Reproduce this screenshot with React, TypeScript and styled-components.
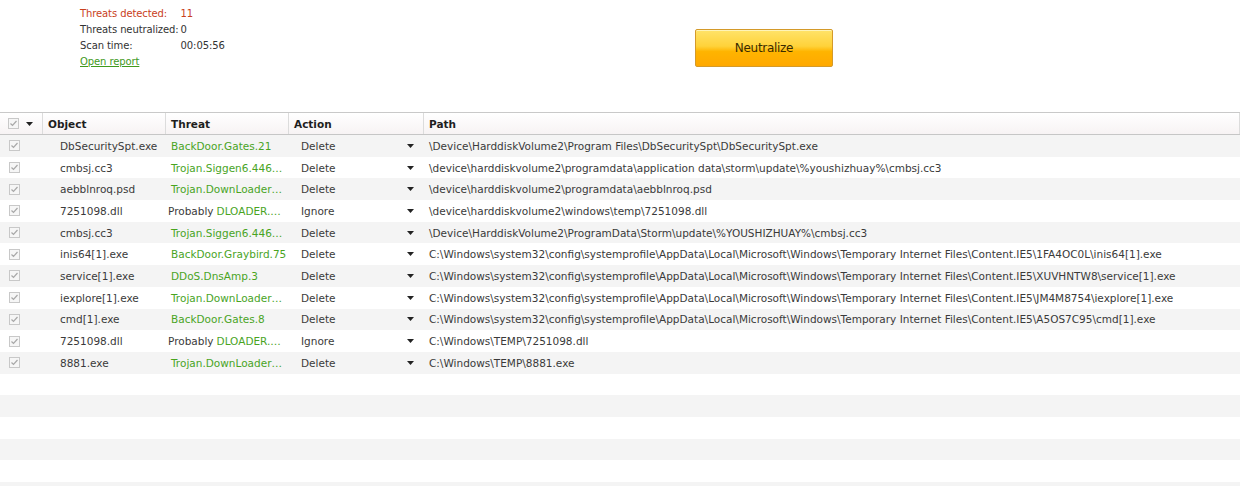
import React from "react";
import styled, { createGlobalStyle } from "styled-components";

const Global = createGlobalStyle`
  html, body { margin: 0; padding: 0; background: #fff; }
  body { font-family: "DejaVu Sans", Tahoma, sans-serif; font-size: 10.5px; color: #3a3a3a; }
`;

const Page = styled.div`
  width: 1240px;
  height: 486px;
  overflow: hidden;
  background: #fff;
`;

const Top = styled.div`
  height: 112px;
  display: flex;
  box-sizing: border-box;
  padding: 5px 0 0 80px;
`;

const Stats = styled.div`
  display: grid;
  grid-template-columns: max-content auto;
  column-gap: 2px;
  grid-auto-rows: 16px;
  align-items: center;
  width: 615px;
  align-content: start;
  font-size: 10px;
  letter-spacing: -0.1px;
`;

const Label = styled.span<{ $red?: boolean }>`
  color: ${(p) => (p.$red ? "#c9401c" : "#333")};
  white-space: nowrap;
`;

const Link = styled.a`
  color: #3f9a1c;
  text-decoration: underline;
  grid-column: 1 / span 2;
`;

const Button = styled.button`
  margin-top: 24px;
  width: 138px;
  height: 38px;
  border: 1px solid #d49a2a;
  border-radius: 2px;
  background: linear-gradient(#ffe36a 0%, #ffd23a 45%, #ffb400 60%, #ffa800 100%);
  font-family: "DejaVu Sans", Tahoma, sans-serif;
  font-size: 12px;
  color: #3a2a00;
  letter-spacing: -0.3px;
  box-shadow: inset 0 1px 0 #fff4b8;
`;

const Table = styled.div`
  border-top: 1px solid #c9c9c9;
`;

const cols = "43px 123px 123px 135px 1fr";

const Header = styled.div`
  display: grid;
  grid-template-columns: ${cols};
  height: 21px;
  background: linear-gradient(#ffffff, #f7f3f4);
  border-bottom: 1px solid #c6c6c6;
`;

const HCell = styled.div<{ $first?: boolean }>`
  display: flex;
  align-items: center;
  padding-left: ${(p) => (p.$first ? "8px" : "5px")};
  border-right: 1px solid #dcdcdc;
  font-weight: bold;
  color: #1e1e1e;
  font-size: 10.5px;
  gap: 7px;
`;

const Row = styled.div<{ $odd: boolean }>`
  display: grid;
  grid-template-columns: ${cols};
  height: 21.7px;
  align-items: center;
  background: ${(p) => (p.$odd ? "#f4f4f4" : "#fff")};
`;

const Cell = styled.div<{ $pad?: number }>`
  padding-left: ${(p) => p.$pad ?? 5}px;
  white-space: nowrap;
  overflow: hidden;
  color: #3a3a3a;
  display: flex;
  align-items: center;
`;

const Green = styled.span`
  color: #49a41f;
  margin-left: 3px;
`;

const ActionCell = styled(Cell)`
  justify-content: space-between;
  padding-left: 12px;
  padding-right: 10px;
`;

const Box = styled.span`
  width: 11px;
  height: 11px;
  box-sizing: border-box;
  border: 1px solid #c8c8c8;
  background: #f6f6f6;
  display: inline-flex;
  align-items: center;
  justify-content: center;
`;

const Check = () => (
  <Box>
    <svg width="9" height="9" viewBox="0 0 9 9">
      <path d="M1.5 4.5 L3.5 6.5 L7.5 2" fill="none" stroke="#a8a8a8" strokeWidth="1.2" />
    </svg>
  </Box>
);

const Arrow = () => (
  <svg width="7" height="4" viewBox="0 0 7 4">
    <path d="M0 0 H7 L3.5 4 Z" fill="#222" />
  </svg>
);

type Item = { obj: string; threat: string; prob?: boolean; action: string; path: string };

const items: Item[] = [
  { obj: "DbSecuritySpt.exe", threat: "BackDoor.Gates.21", action: "Delete", path: "\\Device\\HarddiskVolume2\\Program Files\\DbSecuritySpt\\DbSecuritySpt.exe" },
  { obj: "cmbsj.cc3", threat: "Trojan.Siggen6.446…", action: "Delete", path: "\\device\\harddiskvolume2\\programdata\\application data\\storm\\update\\%youshizhuay%\\cmbsj.cc3" },
  { obj: "aebblnroq.psd", threat: "Trojan.DownLoader…", action: "Delete", path: "\\device\\harddiskvolume2\\programdata\\aebblnroq.psd" },
  { obj: "7251098.dll", threat: "DLOADER.…", prob: true, action: "Ignore", path: "\\device\\harddiskvolume2\\windows\\temp\\7251098.dll" },
  { obj: "cmbsj.cc3", threat: "Trojan.Siggen6.446…", action: "Delete", path: "\\Device\\HarddiskVolume2\\ProgramData\\Storm\\update\\%YOUSHIZHUAY%\\cmbsj.cc3" },
  { obj: "inis64[1].exe", threat: "BackDoor.Graybird.75", action: "Delete", path: "C:\\Windows\\system32\\config\\systemprofile\\AppData\\Local\\Microsoft\\Windows\\Temporary Internet Files\\Content.IE5\\1FA4OC0L\\inis64[1].exe" },
  { obj: "service[1].exe", threat: "DDoS.DnsAmp.3", action: "Delete", path: "C:\\Windows\\system32\\config\\systemprofile\\AppData\\Local\\Microsoft\\Windows\\Temporary Internet Files\\Content.IE5\\XUVHNTW8\\service[1].exe" },
  { obj: "iexplore[1].exe", threat: "Trojan.DownLoader…", action: "Delete", path: "C:\\Windows\\system32\\config\\systemprofile\\AppData\\Local\\Microsoft\\Windows\\Temporary Internet Files\\Content.IE5\\JM4M8754\\iexplore[1].exe" },
  { obj: "cmd[1].exe", threat: "BackDoor.Gates.8", action: "Delete", path: "C:\\Windows\\system32\\config\\systemprofile\\AppData\\Local\\Microsoft\\Windows\\Temporary Internet Files\\Content.IE5\\A5OS7C95\\cmd[1].exe" },
  { obj: "7251098.dll", threat: "DLOADER.…", prob: true, action: "Ignore", path: "C:\\Windows\\TEMP\\7251098.dll" },
  { obj: "8881.exe", threat: "Trojan.DownLoader…", action: "Delete", path: "C:\\Windows\\TEMP\\8881.exe" },
];

export default function App() {
  return (
    <Page>
      <Global />
      <Top>
        <Stats>
          <Label $red>Threats detected:</Label>
          <Label $red>11</Label>
          <Label>Threats neutralized:</Label>
          <Label>0</Label>
          <Label>Scan time:</Label>
          <Label>00:05:56</Label>
          <Link href="#">Open report</Link>
        </Stats>
        <Button>Neutralize</Button>
      </Top>
      <Table>
        <Header>
          <HCell $first>
            <Check />
            <Arrow />
          </HCell>
          <HCell>Object</HCell>
          <HCell>Threat</HCell>
          <HCell>Action</HCell>
          <HCell>Path</HCell>
        </Header>
        {items.map((it, i) => (
          <Row key={i} $odd={i % 2 === 0}>
            <Cell $pad={9}>
              <Check />
            </Cell>
            <Cell $pad={17}>{it.obj}</Cell>
            <Cell $pad={2}>
              {it.prob ? (
                <>
                  Probably<Green>{it.threat}</Green>
                </>
              ) : (
                <Green>{it.threat}</Green>
              )}
            </Cell>
            <ActionCell>
              {it.action}
              <Arrow />
            </ActionCell>
            <Cell>{it.path}</Cell>
          </Row>
        ))}
        {Array.from({ length: 6 }).map((_, i) => (
          <Row key={"e" + i} $odd={(items.length + i) % 2 === 0} />
        ))}
      </Table>
    </Page>
  );
}
